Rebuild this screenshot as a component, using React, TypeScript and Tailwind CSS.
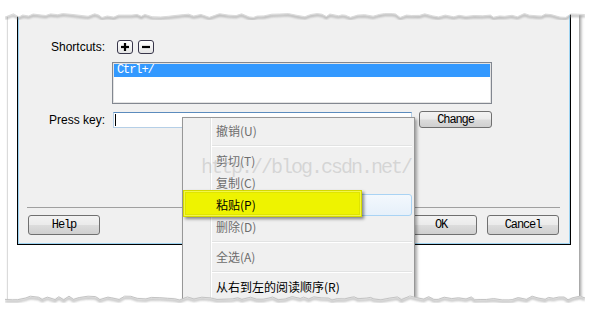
import React from "react";

const SANS = "font-['Liberation_Sans',Arial,sans-serif]";
const MONO = "font-['Liberation_Mono','Courier_New',monospace]";
const CJK = "font-['Noto_Sans_CJK_SC','Microsoft_YaHei',sans-serif]";

// torn paper edge points, deterministic
function jagged(seed: number, width: number, base: number, amp: number) {
  let s = seed;
  const rnd = () => {
    s = (s * 9301 + 49297) % 233280;
    return s / 233280;
  };
  const pts: [number, number][] = [];
  for (let x = 0; x < width; x += 3 + rnd() * 6) {
    pts.push([x, base + rnd() * amp]);
  }
  pts.push([width, base + amp / 2]);
  return pts;
}

function TornEdge({ side }: { side: "top" | "bottom" }) {
  const w = 580;
  const h = side === "top" ? 12 : 16;
  const pts = jagged(side === "top" ? 17 : 91, w, side === "top" ? 1.5 : 4, 4);
  const line = pts.map(([x, y]) => `${x.toFixed(1)},${y.toFixed(1)}`).join(" L");
  const id = `blur-${side}`;
  if (side === "top") {
    return (
      <svg width={w} height={h} className="absolute left-[-3px] top-[-2px] z-20">
        <defs>
          <filter id={id}>
            <feGaussianBlur stdDeviation="0.9" />
          </filter>
        </defs>
        <path d={`M${line}`} fill="none" stroke="#8a8a8a" strokeWidth="1.8" opacity="0.7" transform="translate(0,1.6)" filter={`url(#${id})`} />
        <path d={`M0,0 L${line} L${w},0 Z`} fill="#fff" />
        <path d={`M${line}`} fill="none" stroke="#dadada" strokeWidth="1" />
      </svg>
    );
  }
  return (
    <svg width={w} height={h} className="absolute left-[-3px] top-[278px] z-20">
      <defs>
        <filter id={id}>
          <feGaussianBlur stdDeviation="1" />
        </filter>
      </defs>
      <path d={`M0,${h} L${line} L${w},${h} Z`} fill="#fff" />
      <path d={`M${line}`} fill="none" stroke="#7a7a7a" strokeWidth="2" opacity="0.55" transform="translate(0,1.8)" filter={`url(#${id})`} />
      <path d={`M${line}`} fill="none" stroke="#c4c4c4" strokeWidth="1" />
    </svg>
  );
}

function WinButton({ label, className = "" }: { label: string; className?: string }) {
  return (
    <div
      className={`flex items-center justify-center rounded-[3px] border border-[#707070] bg-[linear-gradient(#f3f3f3_0%,#ebebeb_48%,#dcdcdc_52%,#cfcfcf_100%)] text-[12px] tracking-[-1.1px] text-black ${MONO} ${className}`}
    >
      {label}
    </div>
  );
}

function PlusMinus({ plus }: { plus?: boolean }) {
  return (
    <div className="w-[16px] h-[14px] rounded-[3px] border border-[#38364a] bg-[linear-gradient(#ffffff,#e4e4e4)] flex items-center justify-center">
      <svg width="10" height="10" viewBox="0 0 10 10">
        <path d="M1 5 H9" stroke="#000" strokeWidth="2.2" />
        {plus && <path d="M5 1 V9" stroke="#000" strokeWidth="2.2" />}
      </svg>
    </div>
  );
}

type Item = { label: string; disabled?: boolean; hover?: boolean } | "sep";

const menuItems: Item[] = [
  { label: "撤销(U)", disabled: true },
  "sep",
  { label: "剪切(T)", disabled: true },
  { label: "复制(C)", disabled: true },
  { label: "粘贴(P)", hover: true },
  { label: "删除(D)", disabled: true },
  "sep",
  { label: "全选(A)", disabled: true },
  "sep",
  { label: "从右到左的阅读顺序(R)" },
];

export default function App() {
  return (
    <div className="w-[592px] h-[316px] bg-white pl-[8px] pt-[14px] overflow-hidden">
      <div className="relative w-[571px] h-[286px]">
        <div className="relative w-full h-full overflow-hidden bg-white shadow-[2px_1px_3px_rgba(0,0,0,0.4),-1px_0_1px_rgba(0,0,0,0.12)]">
          {/* --- dialog --- */}
          <div className="ml-[9px] w-[554px] h-[231px] border-x border-b border-black">
            <div className={`h-full flex flex-col border-x border-b border-[#9fd4f2] bg-[#f0f0f0] text-[12px] text-black ${SANS}`}>
              <div className="mt-[26px] h-[14px] flex items-center">
                <span className="w-[86px] text-right leading-[14px]">Shortcuts:</span>
                <div className="ml-[12px] flex gap-[5px]">
                  <PlusMinus plus />
                  <PlusMinus />
                </div>
              </div>

              <div className="mt-[8px] ml-[93px] w-[380px] h-[42px] border border-[#828790]">
                <div className="h-full border border-[#e3e3e3] bg-white">
                  <div className={`h-[13px] bg-[#3399ff] pl-[3px] text-white text-[12px] leading-[13px] tracking-[-1.1px] ${MONO}`}>
                    Ctrl+/
                  </div>
                </div>
              </div>

              <div className="mt-[7px] h-[17px] flex items-center">
                <span className="w-[86px] text-right leading-[14px]">Press key:</span>
                <div className="ml-[8px] w-[299px] h-[16px] border border-[#b5cfe7] border-t-[#5b8bbd] bg-white flex items-center">
                  <div className="ml-[1px] w-px h-[12px] bg-black" />
                </div>
                <WinButton label="Change" className="ml-[7px] w-[73px] h-[17px]" />
              </div>

              <div className="mt-[79px] ml-[8px] w-[533px] h-px bg-[#a0a0a0]" />

              <div className="mt-[7px] flex">
                <WinButton label="Help" className="ml-[9px] w-[72px] h-[20px]" />
                <WinButton label="OK" className="ml-[305px] w-[72px] h-[20px]" />
                <WinButton label="Cancel" className="ml-[10px] w-[72px] h-[20px]" />
              </div>
            </div>
          </div>

          {/* --- context menu --- */}
          <div className={`absolute z-[5] left-[174px] top-[103px] w-[233px] h-[200px] border border-[#979797] bg-[#f0f0f0] shadow-[2px_2px_3px_rgba(0,0,0,0.35)] flex ${CJK}`}>
            <div className="absolute z-[1] left-0 top-[72px] w-[179px] h-[27px] bg-[#eef300] border border-[#d4d900] shadow-[inset_0_0_0_1px_#f2f64a,inset_0_0_0_2px_#dfe400,2px_2px_3px_rgba(0,0,0,0.45)]" />
            <div className="w-[28px] h-full border-r border-[#e2e3e3]" />
            <div className="flex-1 h-full border-l border-white pt-[2px] pr-[2px]">
              {menuItems.map((it, i) =>
                it === "sep" ? (
                  <div key={i} className="h-[8px] flex flex-col justify-center">
                    <div className="h-px bg-[#e2e3e3]" />
                    <div className="h-px bg-white" />
                  </div>
                ) : (
                  <div
                    key={i}
                    className={`h-[22px] flex items-center text-[12px] ${
                      it.hover
                        ? "rounded-[3px] border border-[#a9d3f4] bg-[linear-gradient(#f3f8fd,#e6f0fa)] pl-[3px]"
                        : "pl-[4px]"
                    } ${it.disabled ? "text-[#6d6d6d]" : "text-black"}`}
                  >
                    <span className="relative z-[2] leading-[22px]">{it.label}</span>
                  </div>
                ),
              )}
            </div>
          </div>

          {/* watermark */}
          <div className={`absolute z-10 left-[193px] top-[141px] text-[20px] leading-[26px] tracking-[-2px] text-[#b4b4b4]/45 ${MONO}`}>
            http://blog.csdn.net/
          </div>
        </div>

        <TornEdge side="top" />
        <TornEdge side="bottom" />
      </div>
    </div>
  );
}
